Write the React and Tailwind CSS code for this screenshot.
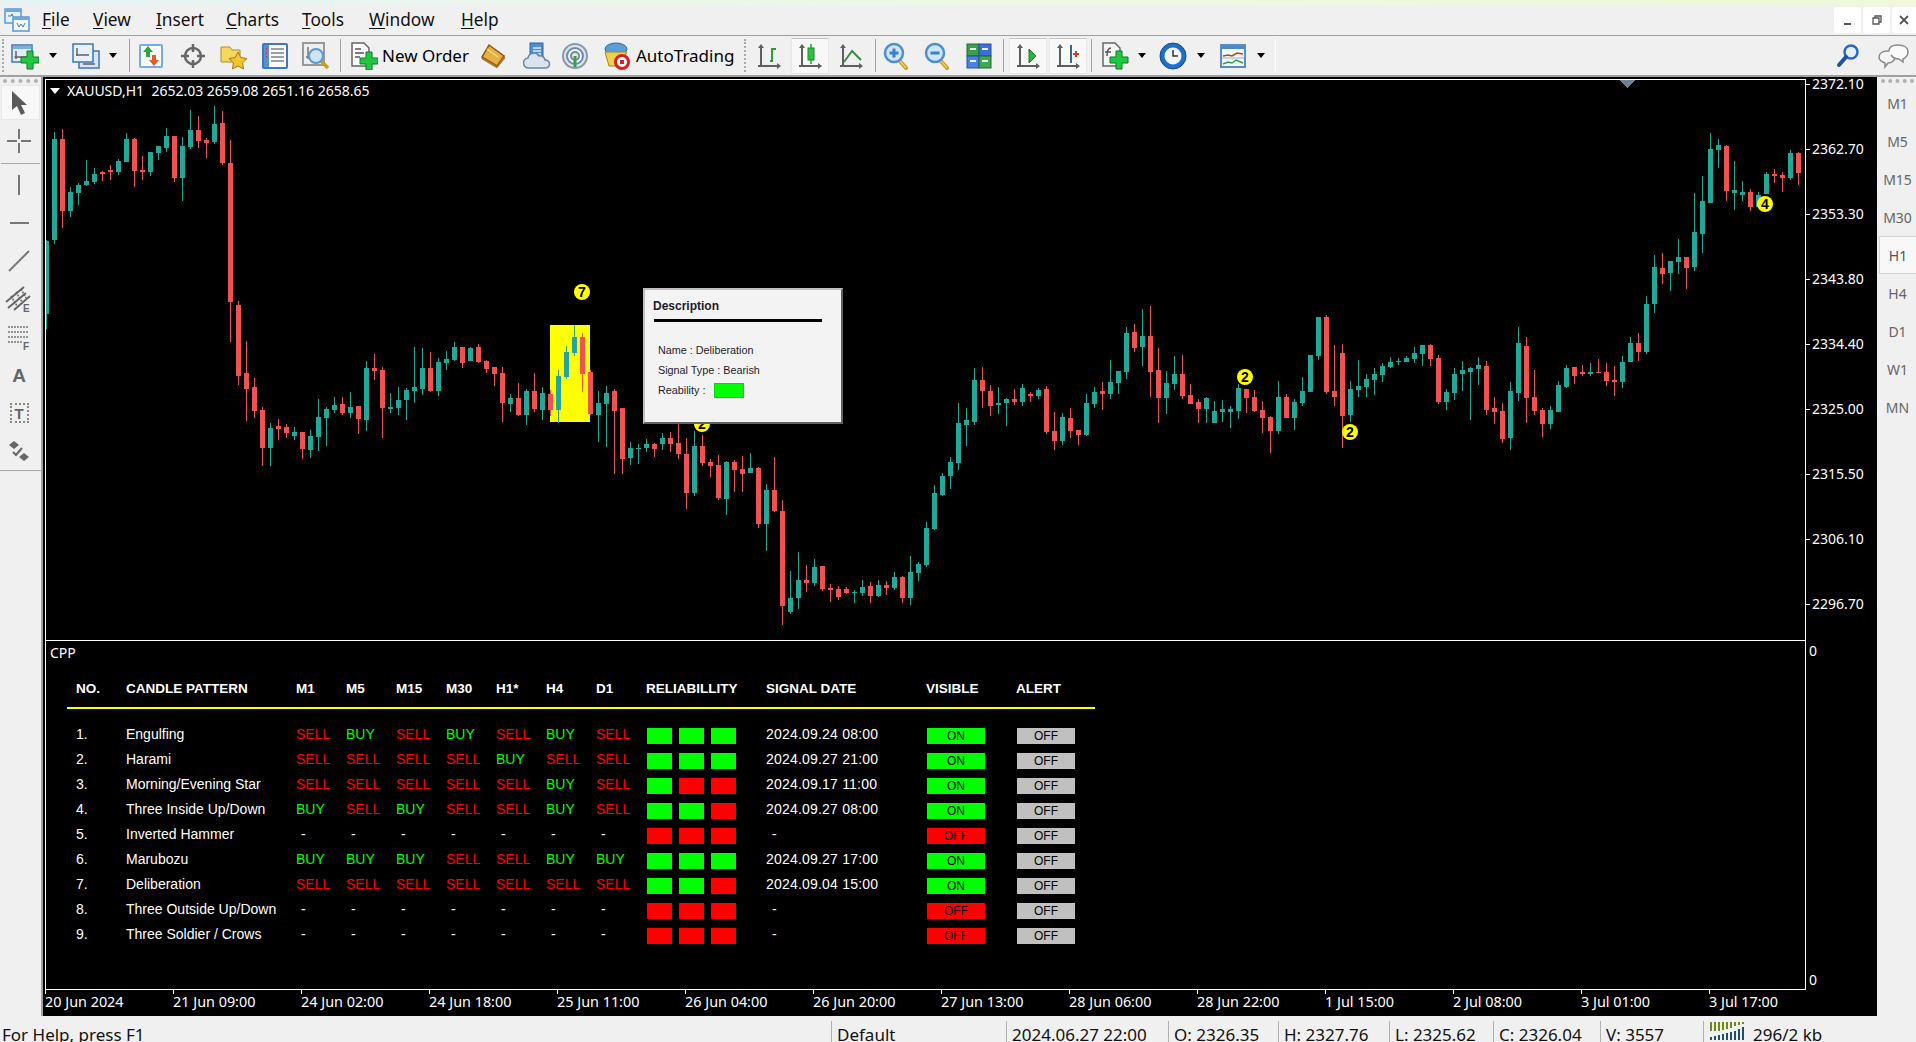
import React from 'react';

const CANDLES = `g 240 241 314 329|g 132 139 240 244|r 129 139 211 228|g 187 192 211 217|g 183 185 193 205|g 160 181 185 186|g 168 174 182 184|r 171 172 174 181|r 165 170 172 180|g 159 161 172 175|g 133 139 162 162|r 138 139 171 187|r 156 170 172 180|g 152 152 172 176|g 146 146 153 160|g 128 136 148 152|r 136 136 178 182|g 137 146 178 201|g 110 130 147 149|r 116 130 141 148|r 138 140 143 158|g 106 124 142 144|r 111 123 163 165|r 140 163 302 342|r 301 305 376 385|r 341 373 389 421|r 378 387 411 418|r 407 410 448 466|g 423 428 448 466|r 419 426 429 440|r 424 427 433 438|g 427 432 436 440|r 432 432 449 459|g 430 436 450 458|g 399 417 437 451|g 407 409 418 446|g 397 405 410 413|r 397 404 413 415|g 392 407 413 418|r 406 406 419 434|g 361 368 420 431|r 354 368 371 380|r 367 370 408 438|g 393 407 409 413|g 387 400 408 415|g 388 390 400 420|g 347 387 391 403|g 348 368 389 395|r 352 368 391 392|g 358 362 391 396|g 351 359 363 370|g 342 347 360 361|r 347 347 363 368|g 347 348 361 361|r 344 347 362 363|r 360 361 369 373|r 367 367 374 386|r 367 373 403 422|g 394 398 404 412|r 383 398 415 416|g 389 391 415 425|r 373 391 409 412|g 387 393 410 420|r 390 394 410 416|g 370 376 410 423|g 346 352 377 379|g 325 337 353 356|r 333 337 374 392|r 370 372 414 415|g 391 403 415 442|g 386 393 404 447|r 389 391 411 474|r 408 408 459 474|g 442 448 458 465|g 444 448 449 464|g 439 444 448 452|r 443 444 449 457|g 433 438 444 450|r 432 438 444 452|r 415 443 454 459|r 438 454 493 509|g 431 446 493 496|r 435 446 463 466|r 459 462 466 477|r 455 465 498 500|g 461 462 499 515|r 460 462 470 492|r 456 469 474 492|g 453 468 473 473|r 467 468 524 528|g 484 490 524 551|r 457 490 511 512|r 500 511 606 625|g 571 598 612 614|g 552 580 598 609|r 565 580 583 592|g 559 567 583 586|r 566 566 589 591|r 584 588 590 602|r 586 589 597 600|r 587 589 593 594|g 590 592 593 603|g 580 587 593 596|r 582 586 596 603|g 580 585 596 597|r 581 585 588 595|g 572 577 588 590|r 576 577 598 603|g 556 572 598 605|g 562 564 573 581|g 522 528 565 567|g 485 493 529 530|g 473 476 495 496|g 457 462 476 489|g 403 423 463 470|g 408 420 425 446|g 368 380 422 425|r 367 380 391 408|r 385 391 406 416|g 387 403 405 414|g 398 399 403 426|r 389 399 402 405|g 384 388 402 406|r 392 394 396 402|g 388 390 396 399|r 386 389 432 434|r 412 431 441 450|g 413 417 441 445|r 408 418 431 438|r 430 430 435 445|g 394 403 435 436|g 387 392 404 408|r 382 391 394 410|g 360 382 394 399|g 371 371 383 394|g 327 333 372 379|r 324 332 348 352|g 309 336 347 366|r 306 336 372 397|r 348 370 398 423|g 371 383 398 414|g 356 374 384 390|r 355 374 396 399|r 384 395 404 404|r 399 402 409 423|g 397 398 409 423|g 401 411 423 423|g 400 409 412 422|g 406 409 412 428|g 384 388 411 419|r 389 389 398 413|r 390 397 411 412|r 401 410 418 433|r 416 417 431 453|g 381 397 431 434|r 394 397 418 418|g 399 402 418 430|g 377 391 403 406|g 355 355 392 392|g 317 317 356 360|r 315 317 392 394|r 345 391 397 406|r 344 353 416 448|g 381 389 415 422|g 360 386 390 397|g 374 379 387 397|g 368 374 380 395|g 363 366 375 382|g 357 362 367 368|g 358 361 362 365|g 356 358 362 362|g 347 353 359 363|g 345 345 354 366|r 344 345 359 366|r 355 358 402 404|g 389 392 402 410|g 368 374 393 400|g 361 370 374 391|g 367 368 372 420|g 357 365 369 385|r 361 366 410 415|r 397 408 412 424|r 403 411 439 443|g 382 391 438 450|g 327 343 393 401|r 337 346 398 423|r 370 397 411 415|r 408 410 424 437|g 406 410 424 429|g 381 385 412 412|g 365 368 387 388|r 367 367 376 384|r 365 372 374 376|g 363 372 374 376|r 359 372 373 373|r 363 372 381 386|r 366 380 382 396|g 356 362 382 388|g 337 343 362 362|r 333 343 352 361|g 296 304 352 354|g 255 267 304 313|r 253 268 274 284|g 261 261 273 291|g 239 257 262 274|r 257 257 268 289|g 193 232 267 271|g 176 201 234 253|g 133 149 203 203|g 139 145 150 168|r 145 146 191 201|g 161 190 193 210|g 181 192 195 201|r 189 192 207 211|g 192 195 207 207|g 172 174 194 194|r 169 174 176 183|r 172 175 178 192|g 150 153 178 180|r 152 153 173 185`
  .split('|')
  .map((row) => row.split(' '));

const MENUS = [
  ['F', 'ile', 'w-[51px]'],
  ['V', 'iew', 'w-[63px]'],
  ['I', 'nsert', 'w-[70px]'],
  ['C', 'harts', 'w-[76px]'],
  ['T', 'ools', 'w-[67px]'],
  ['W', 'indow', 'w-[92px]'],
  ['H', 'elp', 'w-[50px]'],
];

const PRICES = ['2372.10', '2362.70', '2353.30', '2343.80', '2334.40', '2325.00', '2315.50', '2306.10', '2296.70'];
const TIMES = ['20 Jun 2024', '21 Jun 09:00', '24 Jun 02:00', '24 Jun 18:00', '25 Jun 11:00', '26 Jun 04:00', '26 Jun 20:00', '27 Jun 13:00', '28 Jun 06:00', '28 Jun 22:00', '1 Jul 15:00', '2 Jul 08:00', '3 Jul 01:00', '3 Jul 17:00'];
const FRAMES = ['M1', 'M5', 'M15', 'M30', 'H1', 'H4', 'D1', 'W1', 'MN'];
const HEADERS = ['NO.', 'CANDLE PATTERN', 'M1', 'M5', 'M15', 'M30', 'H1*', 'H4', 'D1', 'RELIABILLITY', 'SIGNAL DATE', 'VISIBLE', 'ALERT'];

const ROWS = [
  ['Engulfing', 'SBSBSBS', 'ggg', '2024.09.24 08:00', true],
  ['Harami', 'SSSSBSS', 'ggg', '2024.09.27 21:00', true],
  ['Morning/Evening Star', 'SSSSSBS', 'grr', '2024.09.17 11:00', true],
  ['Three Inside Up/Down', 'BSBSSBS', 'ggr', '2024.09.27 08:00', true],
  ['Inverted Hammer', '-------', 'rrr', '-', false],
  ['Marubozu', 'BBBSSBB', 'ggg', '2024.09.27 17:00', true],
  ['Deliberation', 'SSSSSSS', 'ggr', '2024.09.04 15:00', true],
  ['Three Outside Up/Down', '-------', 'rrr', '-', false],
  ['Three Soldier / Crows', '-------', 'rrr', '-', false],
];

function Icon({ children, w = 28, className = '' }) {
  return (
    <svg width={w} height="28" viewBox={`0 0 ${w} 28`} className={`block shrink-0 ${className}`}>
      {children}
    </svg>
  );
}

function Plus({ x, y }) {
  return (
    <path
      d={`M${x - 3} ${y - 9}h6v6h6v6h-6v6h-6v-6h-6v-6h6z`}
      fill="#20c840"
      stroke="#0c7a24"
      strokeWidth="1"
    />
  );
}

function Axes({ color = '#5f5f5f' }) {
  return (
    <g stroke={color} strokeWidth="2" fill={color}>
      <path d="M6 4v20M3 24h20" fill="none" />
      <path d="M6 2l3 4H3zM26 24l-4-3v6z" stroke="none" />
    </g>
  );
}

function Lens({ plus }) {
  return (
    <>
      <path d="M17 18l7 8" stroke="#c89a20" strokeWidth="4" strokeLinecap="round" />
      <path d="M18 19l6 7" stroke="#f0d060" strokeWidth="1.5" />
      <circle cx="12" cy="11" r="9" fill="#cfe6f8" stroke="#4a90d0" strokeWidth="2.5" />
      <path d="M7.5 11h9" stroke="#3a80c8" strokeWidth="3" />
      {plus && <path d="M12 6.5v9" stroke="#3a80c8" strokeWidth="3" />}
    </>
  );
}

function Arrow({ className }) {
  return <div className={`h-0 w-0 shrink-0 border-x-[4px] border-t-[5px] border-x-transparent border-t-black ${className}`} />;
}

function Sep({ className, color = 'bg-[#a0a0a0]' }) {
  return <div className={`h-[33px] w-px shrink-0 ${color} ${className}`} />;
}

function Grip({ className }) {
  return <div className={`h-[33px] w-[2px] shrink-0 border-l-2 border-dotted border-[#a8a8a8] ${className}`} />;
}

function Tool({ className, active, children }) {
  return (
    <div
      className={`flex h-[36px] shrink-0 items-center justify-center ${active ? 'w-[38px] border border-[#e8e8e8] border-t-[#c4c4c4] bg-[#f8f8f8]' : 'w-[28px]'} ${className}`}
    >
      {children}
    </div>
  );
}

function Toolbar() {
  return (
    <div className="flex h-[41px] items-center border-b-2 border-[#a0a0a0] bg-[#f0f0f0]">
      <Grip className="ml-[2px]" />
      <Tool className="ml-[6px] w-[30px]">
        <Icon>
          <rect x="1" y="3" width="20" height="17" fill="#e4eef8" stroke="#3a78b8" strokeWidth="1.5" />
          <rect x="2" y="4" width="18" height="3" fill="#7ab0e0" />
          <path d="M5 9v8M3.5 15h12" stroke="#606060" strokeWidth="1.5" />
          <Plus x={19} y={18} />
        </Icon>
      </Tool>
      <Arrow className="ml-[9px]" />
      <Tool className="ml-[14px] w-[30px]">
        <Icon>
          <rect x="7" y="9" width="20" height="17" fill="#d8e6f4" stroke="#3a78b8" strokeWidth="1.5" />
          <rect x="1" y="2" width="20" height="18" fill="#e8f0fa" stroke="#3a78b8" strokeWidth="1.5" />
          <path d="M5 6v8M4 13h13M11 22h12" stroke="#606060" strokeWidth="1.5" />
        </Icon>
      </Tool>
      <Arrow className="ml-[8px]" />
      <Sep className="ml-[12px]" />
      <Tool className="ml-[7px]">
        <Icon>
          <rect x="3" y="3" width="22" height="22" rx="1" fill="#fcfcfc" stroke="#7aaade" strokeWidth="2" />
          <path d="M11 4l5 6h-3v5H9v-5H6z" fill="#28a838" />
          <path d="M17 24l-5-6h3v-5h4v5h3z" fill="#e85a28" />
        </Icon>
      </Tool>
      <Tool className="ml-[14px]">
        <Icon>
          <circle cx="14" cy="14" r="8" fill="none" stroke="#666" strokeWidth="2.5" />
          <path d="M14 2v8M14 18v8M2 14h8M18 14h8" stroke="#666" strokeWidth="2.5" />
        </Icon>
      </Tool>
      <Tool className="ml-[13px]">
        <Icon>
          <path d="M1 5h9l2 3h8v12H1z" fill="#f6d860" stroke="#b08a28" />
          <path d="M18 10l2.8 5.6 6.2.9-4.5 4.3 1.1 6.2-5.6-3-5.6 3 1.1-6.2L9 16.5l6.2-.9z" fill="#f4c430" stroke="#a07c18" />
        </Icon>
      </Tool>
      <Tool className="ml-[13px]">
        <Icon>
          <rect x="2" y="2" width="24" height="24" rx="1" fill="#fbfbfb" stroke="#3a78c0" strokeWidth="2" />
          <rect x="3" y="3" width="5" height="22" fill="#5890d0" />
          <path d="M5 7h1M5 11h1M5 15h1" stroke="#e03030" strokeWidth="2" />
          <path d="M10 7h13M10 11h13M10 15h13M10 19h13" stroke="#444" strokeWidth="1" />
        </Icon>
      </Tool>
      <Tool className="ml-[13px]">
        <Icon>
          <rect x="1" y="1" width="21" height="22" fill="#eee" stroke="#999" strokeWidth="2" />
          <path d="M6 5v12M4 15h14" stroke="#777" strokeWidth="1.5" />
          <path d="M19 19l7 7" stroke="#c89a20" strokeWidth="3.5" />
          <circle cx="14" cy="14" r="7" fill="#cfe4f4" stroke="#5a9ccc" strokeWidth="2" />
        </Icon>
      </Tool>
      <Sep className="ml-[10px]" />
      <Tool className="ml-[9px]">
        <Icon>
          <path d="M2 1h12l5 5v18H2z" fill="#fff" stroke="#666" strokeWidth="1.5" />
          <path d="M5 7h6M5 11h9M5 15h5" stroke="#555" strokeWidth="1.5" />
          <Plus x={19} y={19} />
        </Icon>
      </Tool>
      <div className="ml-[4px] w-[86px] shrink-0 whitespace-nowrap text-[17px] leading-none text-black">New Order</div>
      <Tool className="ml-[11px]">
        <Icon>
          <path d="M10 3l15 11-7 10L3 15z" fill="#e8b040" stroke="#8a5a18" strokeWidth="1.5" />
          <path d="M3 15l15 9 7-10 1 2-8 10L3 17z" fill="#b07a28" stroke="#8a5a18" strokeWidth="0.5" />
          <path d="M8 7l11 8" stroke="#f6d888" strokeWidth="1.5" />
        </Icon>
      </Tool>
      <Tool className="ml-[16px]">
        <Icon>
          <rect x="7" y="1" width="13" height="16" fill="#4a90d8" stroke="#2a62a8" />
          <path d="M10 6h8M10 9h8M10 12h8" stroke="#dceaf8" strokeWidth="1.5" />
          <path d="M6 26a5 5 0 0 1-1-10 6 6 0 0 1 11-2 5 5 0 0 1 6 4 4 4 0 0 1 1 8z" fill="#dbe4ee" stroke="#6a86a6" strokeWidth="1.5" />
        </Icon>
      </Tool>
      <Tool className="ml-[10px]">
        <Icon>
          <circle cx="14" cy="14" r="12" fill="#e0e4e8" stroke="#8a98a8" strokeWidth="2" />
          <circle cx="14" cy="14" r="8" fill="#f2f4f6" stroke="#6a8ab8" strokeWidth="2" />
          <circle cx="14" cy="14" r="4" fill="#e0e8f0" stroke="#7a8a9a" strokeWidth="2" />
          <path d="M14 14v11" stroke="#2aa848" strokeWidth="3" />
        </Icon>
      </Tool>
      <Tool className="ml-[13px]">
        <Icon>
          <ellipse cx="14" cy="7" rx="11" ry="6" fill="#5aa0d8" stroke="#2a6a9a" />
          <path d="M3 10l4 14h10l8-14z" fill="#f0d050" stroke="#a08820" />
          <circle cx="20" cy="20" r="6.5" fill="#fff" stroke="#d82020" strokeWidth="3" />
          <rect x="18" y="18" width="4" height="4" fill="#d82020" />
        </Icon>
      </Tool>
      <div className="ml-[6px] w-[99px] shrink-0 whitespace-nowrap text-[17px] leading-none text-black">AutoTrading</div>
      <Grip className="ml-[9px]" />
      <Tool className="ml-[9px]">
        <Icon>
          <Axes />
          <path d="M15 19h2V7h4" fill="none" stroke="#28a038" strokeWidth="2" />
        </Icon>
      </Tool>
      <Tool active className="ml-[8px]">
        <Icon>
          <Axes />
          <path d="M15 2v20" stroke="#28a038" strokeWidth="1.5" />
          <rect x="12" y="6" width="6" height="12" fill="#30c040" stroke="#1a8a2a" />
        </Icon>
      </Tool>
      <Tool className="ml-[8px]">
        <Icon>
          <Axes />
          <path d="M7 20l8-11 9 9" fill="none" stroke="#3a8a48" strokeWidth="2" />
        </Icon>
      </Tool>
      <Sep className="ml-[10px]" />
      <Tool className="ml-[6px]">
        <Icon>
          <Lens plus />
        </Icon>
      </Tool>
      <Tool className="ml-[13px]">
        <Icon>
          <Lens />
        </Icon>
      </Tool>
      <Tool className="ml-[14px]">
        <Icon>
          <rect x="2" y="2" width="12" height="12" fill="#38a048" stroke="#206a30" />
          <rect x="14" y="2" width="12" height="12" fill="#3a70d8" stroke="#2050a8" />
          <rect x="2" y="14" width="12" height="12" fill="#4a80e0" stroke="#2050a8" />
          <rect x="14" y="14" width="12" height="12" fill="#40a850" stroke="#206a30" />
          <path d="M5 7h6M17 7h6M5 19h6M17 19h6" stroke="#e8f0e8" strokeWidth="2" />
        </Icon>
      </Tool>
      <Sep className="ml-[10px]" />
      <Tool active className="ml-[5px]">
        <Icon>
          <Axes />
          <path d="M15 7l7 7-7 7z" fill="#30b040" stroke="#1a7a2a" />
        </Icon>
      </Tool>
      <Tool active className="ml-[2px]">
        <Icon>
          <Axes />
          <path d="M17 3v18" stroke="#2a6a9a" strokeWidth="2" />
          <path d="M19 12h6M22 9v6" stroke="#d83a20" strokeWidth="2" />
        </Icon>
      </Tool>
      <Sep className="ml-[4px]" />
      <Tool className="ml-[9px]">
        <Icon>
          <path d="M2 1h12l5 5v18H2z" fill="#f4f4f4" stroke="#666" strokeWidth="1.5" />
          <path d="M6 14c0-6 2-8 4-8M4 10h6" fill="none" stroke="#555" strokeWidth="1.5" />
          <Plus x={18} y={18} />
        </Icon>
      </Tool>
      <Arrow className="ml-[9px]" />
      <Tool className="ml-[13px]">
        <Icon>
          <circle cx="14" cy="14" r="13" fill="#1e70c8" stroke="#144a88" />
          <circle cx="14" cy="14" r="8.5" fill="#f4f8fc" />
          <path d="M14 8v6h5" fill="none" stroke="#333" strokeWidth="1.5" />
        </Icon>
      </Tool>
      <Arrow className="ml-[10px]" />
      <Tool className="ml-[14px]">
        <Icon>
          <rect x="2" y="3" width="24" height="22" fill="#f4f8fc" stroke="#5a8cc0" strokeWidth="2" />
          <rect x="3" y="4" width="22" height="3" fill="#4a88c8" />
          <path d="M4 14l5-1 4 1 5-3 6 1" fill="none" stroke="#b04a20" strokeWidth="1.5" />
          <path d="M3 16h22" stroke="#9ab0c8" />
          <path d="M4 22l5-2 4 1 4-3 7 3" fill="none" stroke="#30a048" strokeWidth="1.5" />
        </Icon>
      </Tool>
      <Arrow className="ml-[10px]" />
      <Sep className="ml-[10px]" color="bg-white" />
      <div className="ml-auto mr-[6px] flex items-center gap-[16px]">
        <Icon w={24}>
          <circle cx="15" cy="10" r="6.5" fill="#e6f0fa" stroke="#2a68c8" strokeWidth="2.5" />
          <path d="M10 15l-7 8" stroke="#1e50a8" strokeWidth="4" strokeLinecap="round" />
        </Icon>
        <Icon w={34}>
          <path d="M3 15c0-4 4-6 8-6s8 2 8 6-4 6-7 6l-3 4v-4c-3-1-6-3-6-6z" fill="#f6f6f6" stroke="#888" strokeWidth="1.5" />
          <path d="M13 9c0-4 4-6 9-6s10 2 10 7-3 6-5 7v3l-4-3c-3 0-6-1-8-4" fill="#fafafa" stroke="#8a8a8a" strokeWidth="1.5" />
        </Icon>
      </div>
    </div>
  );
}

function MenuBar() {
  return (
    <div className="flex h-[31px] items-center border-b border-[#a0a0a0] bg-[#f0f0f0]">
      <svg width="26" height="26" viewBox="0 0 26 26" className="ml-[4px] shrink-0">
        <rect x="1" y="2" width="16" height="14" fill="#e8f2fc" stroke="#5a98d8" strokeWidth="1.5" />
        <rect x="1" y="2" width="16" height="3" fill="#6aa8e8" />
        <path d="M4 9h3l1-2 2 4h3" fill="none" stroke="#3a78c0" />
        <rect x="9" y="10" width="16" height="14" fill="#f4f9fe" stroke="#5a98d8" strokeWidth="1.5" />
        <rect x="9" y="10" width="16" height="3" fill="#6aa8e8" />
        <path d="M13 16l2 4 2-3 2 3 2-4" fill="none" stroke="#3a78c0" />
      </svg>
      <div className="ml-[12px] flex text-[17.3px] leading-none text-[#111]">
        {MENUS.map(([first, rest, width]) => (
          <div key={first} className={width}>
            <span className="underline underline-offset-2">{first}</span>
            {rest}
          </div>
        ))}
      </div>
      <div className="ml-auto flex gap-[2px]">
        <div className="flex h-[26px] w-[27px] items-end justify-center rounded-[2px] bg-white pb-[8px]">
          <div className="h-[2px] w-[7px] bg-[#555]" />
        </div>
        <div className="flex h-[26px] w-[27px] items-center justify-center rounded-[2px] bg-white">
          <svg width="10" height="10" viewBox="0 0 10 10">
            <path d="M3 3V1h6v6H7M1 3h6v6H1z" fill="none" stroke="#555" strokeWidth="1.3" />
          </svg>
        </div>
        <div className="flex h-[26px] w-[24px] items-center justify-center rounded-l-[2px] bg-white">
          <svg width="10" height="10" viewBox="0 0 10 10">
            <path d="M1 1l8 8M9 1l-8 8" stroke="#555" strokeWidth="1.8" />
          </svg>
        </div>
      </div>
    </div>
  );
}

function LeftTool({ children }) {
  return <div className="flex h-[38px] items-center justify-center pr-[3px]">{children}</div>;
}

function LeftToolbar() {
  return (
    <div className="flex w-[43px] shrink-0 flex-col border-r-2 border-[#a0a0a0] bg-[#f0f0f0]">
      <div className="mx-[3px] mt-[2px] h-[6px] border-t-4 border-dotted border-[#b0b0b0]" />
      <div className="ml-[1px] mr-[1px] flex h-[35px] items-center justify-center border border-[#e8e8e8] bg-[#f8f8f8] pr-[3px]">
        <svg width="20" height="28" viewBox="0 0 20 28">
          <path d="M3 2v19l5-4 4 9 4-2-4-8h6z" fill="#5a5a5a" />
        </svg>
      </div>
      <div className="mt-[2px]">
        <LeftTool>
          <svg width="26" height="26" viewBox="0 0 26 26">
            <path d="M13 1v10M13 15v10M1 13h10M15 13h10" stroke="#777" strokeWidth="2" />
          </svg>
        </LeftTool>
      </div>
      <div className="mx-[1px] mt-[3px] h-px bg-[#a8a8a8]" />
      <div className="mt-[2px]">
        <LeftTool>
          <div className="h-[20px] w-[2px] bg-[#777]" />
        </LeftTool>
        <LeftTool>
          <div className="h-[2px] w-[19px] bg-[#777]" />
        </LeftTool>
        <LeftTool>
          <svg width="22" height="22" viewBox="0 0 22 22">
            <path d="M1 21L21 1" stroke="#777" strokeWidth="2" />
          </svg>
        </LeftTool>
        <LeftTool>
          <svg width="28" height="28" viewBox="0 0 28 28">
            <path d="M1 17L19 2M3 23L21 8M9 25L25 11" stroke="#666" strokeWidth="2" />
            <path d="M6 11l6 10M11 7l6 10M16 4l5 9" stroke="#666" strokeWidth="1.5" strokeDasharray="2 1" />
            <text x="18" y="27" fontSize="10" fontWeight="700" fill="#666" fontFamily="Liberation Sans">E</text>
          </svg>
        </LeftTool>
        <LeftTool>
          <svg width="28" height="28" viewBox="0 0 28 28">
            <path d="M3 4h20M3 9h20M3 14h20M3 19h14" stroke="#777" strokeWidth="1.5" strokeDasharray="2 1" />
            <text x="18" y="27" fontSize="10" fontWeight="700" fill="#666" fontFamily="Liberation Sans">F</text>
          </svg>
        </LeftTool>
        <LeftTool>
          <span className="text-[19px] font-bold leading-none text-[#666] [font-family:'Liberation_Sans',sans-serif]">A</span>
        </LeftTool>
        <LeftTool>
          <div className="flex h-[20px] w-[19px] items-center justify-center border-2 border-dotted border-[#888] text-[15px] font-bold leading-none text-[#666] [font-family:'Liberation_Sans',sans-serif]">
            T
          </div>
        </LeftTool>
        <LeftTool>
          <svg width="24" height="24" viewBox="0 0 24 24">
            <path d="M7 2l5 4-5 4-5-4zM17 14l5 4-5 4-5-4z" fill="#666" />
            <path d="M6 13l3 3 6-7" fill="none" stroke="#666" strokeWidth="2" />
          </svg>
        </LeftTool>
      </div>
      <div className="h-px bg-[#a8a8a8]" />
    </div>
  );
}

function RightToolbar() {
  return (
    <div className="flex w-[39px] shrink-0 flex-col bg-[#f0f0f0] pl-[2px]">
      <div className="mx-[2px] mt-[2px] h-[5px] border-t-4 border-dotted border-[#b0b0b0]" />
      {FRAMES.map((frame) => (
        <div
          key={frame}
          className={
            frame === 'H1'
              ? 'flex h-[38px] items-center justify-center border border-[#d4d4d4] border-r-0 bg-[#f8f8f8] text-[14px] text-[#555]'
              : 'flex h-[38px] items-center justify-center text-[14px] text-[#666]'
          }
        >
          {frame}
        </div>
      ))}
    </div>
  );
}

function Marker({ x, y, label }) {
  return (
    <g>
      <circle cx={x} cy={y} r="8" fill="#ffff00" />
      <text x={x} y={y + 5} textAnchor="middle" fontSize="14" fontWeight="700" fill="#000" fontFamily="Liberation Sans">
        {label}
      </text>
    </g>
  );
}

function PriceChart() {
  return (
    <svg width="1759" height="560" viewBox="46 80 1759 560" className="block" shapeRendering="crispEdges">
      <rect x="550" y="325" width="40" height="97" fill="#ffff00" />
      {CANDLES.map(([kind, high, top, bottom, low], index) => {
        const x = 46 + index * 8;
        const fill = kind === 'g' ? '#26a69a' : '#ef5350';
        return (
          <g key={index} fill={fill}>
            <rect x={x} y={high} width="1" height={low - high} />
            <rect x={x - 2} y={top} width="5" height={Math.max(bottom - top, 1)} />
          </g>
        );
      })}
      <path d="M1619 80h16l-8 8z" fill="#708090" />
      <g shapeRendering="auto">
        <Marker x={582} y={292} label="7" />
        <Marker x={702} y={424} label="2" />
        <Marker x={1245} y={377} label="2" />
        <Marker x={1350} y={432} label="2" />
        <Marker x={1765} y={204} label="4" />
      </g>
    </svg>
  );
}

function Popup() {
  return (
    <div className="absolute left-[597px] top-[208px] h-[136px] w-[200px] border-2 border-[#c0c0c0] border-b-[#606060] border-r-[#606060] bg-[#f3f3f3] text-[#1c1c2c] [font-family:'Liberation_Sans',sans-serif]">
      <div className="ml-[8px] mt-[9px] text-[12px] font-bold leading-[14px]">Description</div>
      <div className="ml-[9px] mt-[6px] h-[3px] w-[168px] bg-black" />
      <div className="ml-[13px] mt-[18px] text-[10.8px] leading-[20px]">
        <div>Name : Deliberation</div>
        <div>Signal Type : Bearish</div>
        <div className="flex items-center">
          Reability :
          <div className="ml-[9px] h-[15px] w-[30px] border border-[#10d010] bg-[#00ff00]" />
        </div>
      </div>
    </div>
  );
}

function PatternTable() {
  return (
    <div className="ml-[21px] w-[1028px] pl-[9px] [font-family:'Liberation_Sans',sans-serif]">
      <div className="grid h-[38px] grid-cols-[50px_170px_repeat(7,50px)_120px_160px_90px_90px] items-center pt-[2px] text-[13.5px] font-bold text-white">
        {HEADERS.map((header) => (
          <div key={header}>{header}</div>
        ))}
      </div>
      <div className="-ml-[9px] h-[2px] bg-[#ffff00]" />
      <div className="mt-[14px] text-[14px] text-white">
        {ROWS.map(([name, signals, reliability, date, visible], index) => (
          <div key={name} className="grid h-[25px] grid-cols-[50px_170px_repeat(7,50px)_120px_160px_90px_90px] items-center">
            <div className="pb-[2px]">{index + 1}.</div>
            <div className="whitespace-nowrap pb-[2px]">{name}</div>
            {signals.split('').map((signal, col) => (
              <SignalCell key={col} signal={signal} />
            ))}
            <div className="ml-[1px] flex gap-[7px]">
              {reliability.split('').map((level, col) => (
                <div key={col} className={level === 'g' ? 'h-[16px] w-[25px] bg-[#00ff00]' : 'h-[16px] w-[25px] bg-[#ff0000]'} />
              ))}
            </div>
            <div className={date === '-' ? 'pb-[2px] pl-[6px]' : 'pb-[2px] tracking-[0.2px]'}>{date}</div>
            <div className={visible ? 'ml-[1px] flex h-[16px] w-[58px] items-center justify-center bg-[#00ff00] text-[12px] text-black' : 'ml-[1px] flex h-[16px] w-[58px] items-center justify-center bg-[#ff0000] text-[12px] text-black'}>
              {visible ? 'ON' : 'OFF'}
            </div>
            <div className="ml-[1px] flex h-[16px] w-[58px] items-center justify-center bg-[#c0c0c0] text-[12px] text-black">OFF</div>
          </div>
        ))}
      </div>
    </div>
  );
}

function SignalCell({ signal }) {
  if (signal === 'S') return <div className="pb-[2px] text-[#ff0000]">SELL</div>;
  if (signal === 'B') return <div className="pb-[2px] text-[#00ff00]">BUY</div>;
  return <div className="pb-[2px] pl-[5px]">-</div>;
}

function ChartWindow() {
  return (
    <div className="flex min-w-0 flex-1 flex-col bg-black pl-[2px] pt-[2px] text-white [font-family:'Noto_Sans',sans-serif]">
      <div className="flex h-[561px]">
        <div className="relative w-[1761px] shrink-0 border-x border-t border-white">
          <PriceChart />
          <div className="absolute left-[4px] top-0 flex h-[21px] items-center text-[14px] leading-none">
            <div className="mr-[7px] h-0 w-0 border-x-[5px] border-t-[6px] border-x-transparent border-t-white" />
            <span className="whitespace-pre">XAUUSD,H1  2652.03 2659.08 2651.16 2658.65</span>
          </div>
          <Popup />
        </div>
        <div className="pt-[5px] text-[14px] leading-none">
          {PRICES.map((price) => (
            <div key={price} className="flex h-[65px] items-start">
              <div className="h-px w-[4px] bg-white" />
              <span className="ml-[2px] -translate-y-1/2">{price}</span>
            </div>
          ))}
        </div>
      </div>
      <div className="flex h-[350px]">
        <div className="w-[1761px] shrink-0 border border-white">
          <div className="flex h-[24px] items-center pl-[4px] text-[14px] leading-none">CPP</div>
          <div className="mt-[4px]">
            <PatternTable />
          </div>
        </div>
        <div className="flex flex-1 flex-col justify-between pl-[3px] pt-[1px] text-[14px] leading-[20px]">
          <div>0</div>
          <div>0</div>
        </div>
      </div>
      <div className="flex h-[26px] text-[14.4px] leading-[24px]">
        {TIMES.map((time) => (
          <div key={time} className="relative w-[128px] shrink-0 whitespace-nowrap">
            <div className="absolute left-0 top-0 h-[4px] w-px bg-white" />
            {time}
          </div>
        ))}
      </div>
    </div>
  );
}

function StatusCell({ width, children }) {
  return <div className={`h-[30px] shrink-0 overflow-hidden border-l border-[#b0b0b0] pl-[5px] ${width}`}>{children}</div>;
}

function StatusBar() {
  return (
    <div className="h-[26px] overflow-hidden bg-[#f0f0f0] text-[17px] leading-[28px] text-[#111]">
      <div className="flex pt-[5px]">
        <div className="w-[831px] shrink-0 pl-[2px]">For Help, press F1</div>
        <StatusCell width="w-[175px]">Default</StatusCell>
        <StatusCell width="w-[162px]">2024.06.27 22:00</StatusCell>
        <StatusCell width="w-[110px]">O: 2326.35</StatusCell>
        <StatusCell width="w-[111px]">H: 2327.76</StatusCell>
        <StatusCell width="w-[104px]">L: 2325.62</StatusCell>
        <StatusCell width="w-[107px]">C: 2326.04</StatusCell>
        <StatusCell width="w-[103px]">V: 3557</StatusCell>
        <StatusCell width="flex-1">
          <div className="flex items-start">
            <svg width="40" height="18" viewBox="0 0 40 18" className="mt-[1px] shrink-0" shapeRendering="crispEdges">
              <path d="M2 0v9M6 0v9M10 0v9M14 0v8M18 0v7M22 0v6M26 0v4M30 0v3M34 0v2" stroke="#6e8a10" strokeWidth="2" />
              <path d="M2 15v3M6 14v4M10 13v5M14 12v6M18 11v7M22 10v8M26 9v9M30 7v11M34 5v13" stroke="#18506e" strokeWidth="2" />
            </svg>
            <span className="ml-[4px] whitespace-nowrap">296/2 kb</span>
          </div>
        </StatusCell>
      </div>
    </div>
  );
}

export default function App() {
  return (
    <div className="flex h-[1042px] w-[1916px] flex-col overflow-hidden bg-[#f0f0f0] [font-family:'Noto_Sans',sans-serif]">
      <div className="h-[5px] bg-gradient-to-r from-[#e6f3f5] via-[#eef8e6] to-[#f0f8d8]" />
      <MenuBar />
      <Toolbar />
      <div className="flex min-h-0 flex-1">
        <LeftToolbar />
        <ChartWindow />
        <RightToolbar />
      </div>
      <StatusBar />
    </div>
  );
}
